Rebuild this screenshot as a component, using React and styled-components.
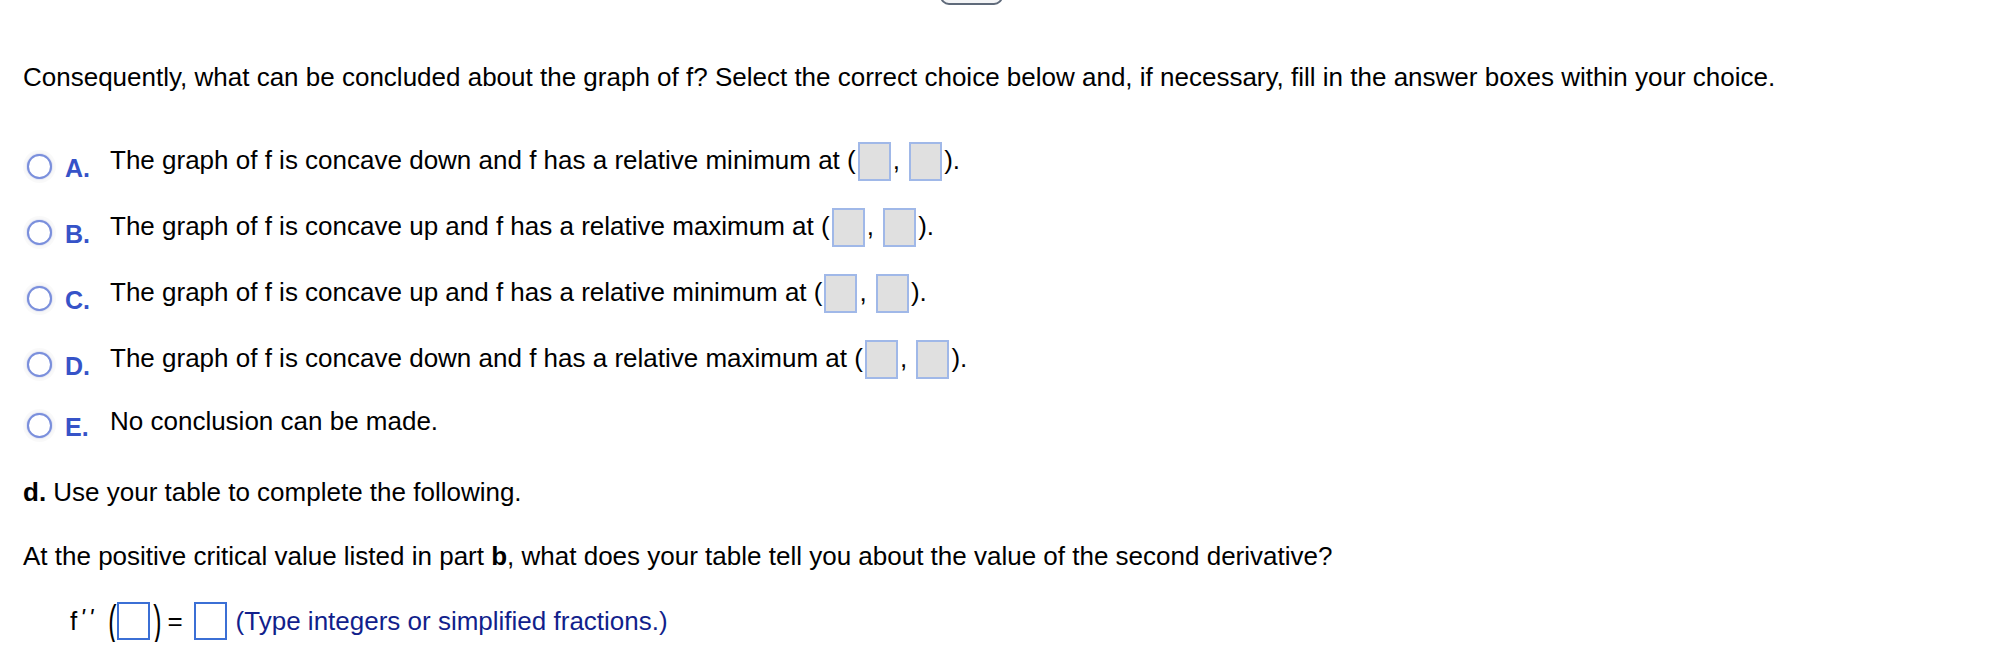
import React from "react";
import styled, { createGlobalStyle } from "styled-components";

const GlobalStyle = createGlobalStyle`
  body {
    margin: 0;
    background: #fff;
    color: #000;
    font-family: "Liberation Sans", Arial, Helvetica, sans-serif;
  }
`;

const Page = styled.div`
  padding-left: 23px;
  font-size: 26px;
  line-height: 30px;
`;

const TopStrip = styled.div`
  height: 5px;
  overflow: hidden;
  padding-left: 940px;
`;

const TopButton = styled.div`
  box-sizing: border-box;
  width: 63px;
  height: 24px;
  margin-top: -19px;
  border: 2px solid #5f6a7a;
  border-radius: 9px;
  background: #f3f4f6;
`;

const Question = styled.p`
  margin: ${({ $top }) => $top}px 0 0 0;
`;

const OptionList = styled.div`
  display: flex;
  flex-direction: column;
  margin-top: 50px;
  padding-left: 4px;
`;

const Option = styled.div`
  display: flex;
  align-items: flex-start;
  & + & {
    margin-top: ${({ $plain }) => ($plain ? 25 : 27)}px;
  }
`;

const Radio = styled.span`
  box-sizing: border-box;
  flex: none;
  width: 25px;
  height: 25px;
  margin-top: ${({ $plain }) => ($plain ? 7 : 12)}px;
  border: 2.5px solid #7a8fdc;
  border-radius: 50%;
  background: #fff;
  box-shadow: 0 0 1.5px rgba(80, 102, 208, 0.6),
    0 0 0 4px rgba(0, 0, 0, 0.025);
`;

const Letter = styled.span`
  flex: none;
  width: 45px;
  margin-left: 13px;
  margin-top: ${({ $plain }) => ($plain ? 6 : 11)}px;
  font-size: 25px;
  line-height: 30px;
  font-weight: bold;
  color: #3653c8;
`;

const OptionText = styled.span`
  white-space: nowrap;
`;

const AnswerBox = styled.span`
  display: inline-block;
  box-sizing: border-box;
  width: 33px;
  height: 39px;
  margin: 0 2px;
  vertical-align: -12px;
  border: 2px solid #a0b8e8;
  background: #e0e0e0;
`;

const FormulaRow = styled.div`
  display: flex;
  align-items: center;
  margin-top: 29px;
  padding-left: 47px;
  white-space: nowrap;
`;

const Fn = styled.span`
  display: inline-flex;
  align-items: flex-start;
`;

const Prime = styled.span`
  font-style: italic;
  font-size: 24px;
  line-height: 24px;
  margin-left: ${({ $ml }) => $ml}px;
`;

const Paren = styled.span`
  display: inline-block;
  width: 10px;
  margin-left: ${({ $ml }) => $ml || 0}px;
  font-size: 45px;
  line-height: 42px;
  text-align: center;
  transform: scaleX(0.55);
`;

const Equals = styled.span`
  margin-left: 6px;
`;

const EntryBox = styled.span`
  display: inline-block;
  box-sizing: border-box;
  width: 33px;
  height: 38px;
  margin-left: ${({ $ml }) => $ml || 0}px;
  border: 2px solid #3b6fd5;
  background: #fff;
`;

const Hint = styled.span`
  margin-left: 9px;
  color: #121f8c;
`;

const options = [
  { key: "A", text: "The graph of f is concave down and f has a relative minimum at", boxes: true },
  { key: "B", text: "The graph of f is concave up and f has a relative maximum at", boxes: true },
  { key: "C", text: "The graph of f is concave up and f has a relative minimum at", boxes: true },
  { key: "D", text: "The graph of f is concave down and f has a relative maximum at", boxes: true },
  { key: "E", text: "No conclusion can be made.", boxes: false },
];

export default function App() {
  return (
    <>
      <GlobalStyle />
      <TopStrip>
        <TopButton />
      </TopStrip>
      <Page>
        <Question $top={57}>
          Consequently, what can be concluded about the graph of f? Select the correct choice below
          and, if necessary, fill in the answer boxes within your choice.
        </Question>

        <OptionList>
          {options.map((o) => (
            <Option key={o.key} $plain={!o.boxes}>
              <Radio $plain={!o.boxes} />
              <Letter $plain={!o.boxes}>{o.key}.</Letter>
              <OptionText>
                {o.text}
                {o.boxes && (
                  <>
                    {" ("}
                    <AnswerBox />,{" "}
                    <AnswerBox />
                    {")."}
                  </>
                )}
              </OptionText>
            </Option>
          ))}
        </OptionList>

        <Question $top={35}>
          <b>d.</b> Use your table to complete the following.
        </Question>
        <Question $top={34}>
          At the positive critical value listed in part <b>b</b>, what does your table tell you about
          the value of the second derivative?
        </Question>

        <FormulaRow>
          <Fn>
            f<Prime $ml={3}>'</Prime>
            <Prime $ml={4}>'</Prime>
          </Fn>
          <Paren $ml={13}>(</Paren>
          <EntryBox $ml={1} />
          <Paren $ml={1}>)</Paren>
          <Equals>=</Equals>
          <EntryBox $ml={11} />
          <Hint>(Type integers or simplified fractions.)</Hint>
        </FormulaRow>
      </Page>
    </>
  );
}
